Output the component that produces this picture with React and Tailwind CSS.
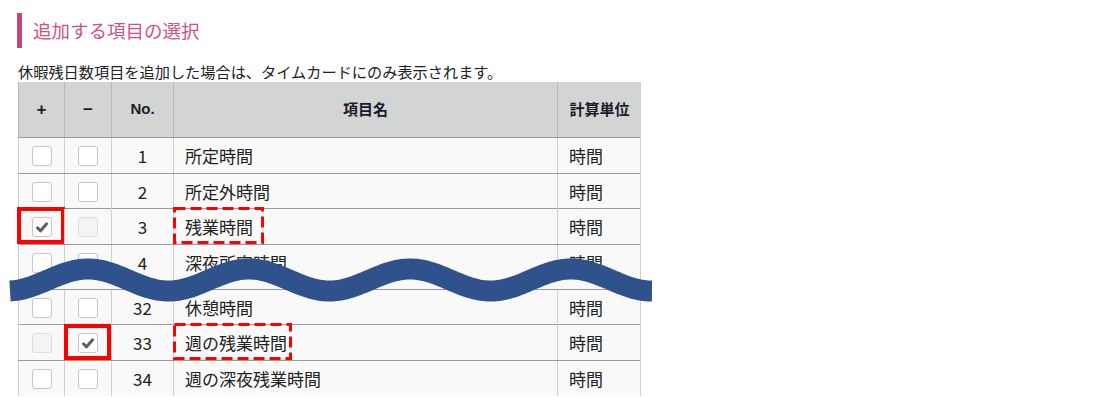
import React from 'react'

const rows = [
  { no: '1', name: '所定時間', h: 36 },
  { no: '2', name: '所定外時間', h: 35 },
  { no: '3', name: '残業時間', h: 36, plus: 'checked', minus: 'disabled', markPlus: true, dashW: 91 },
  { no: '4', name: '深夜所定時間', h: 45 },
  { no: '32', name: '休憩時間', h: 35 },
  { no: '33', name: '週の残業時間', h: 36, plus: 'disabled', minus: 'checked', markMinus: true, dashW: 119 },
  { no: '34', name: '週の深夜残業時間', h: 36 },
]

function Checkbox({ state }) {
  if (state === 'disabled') {
    return <div className="h-[20px] w-[20px] rounded-[3px] border border-[#dedede] bg-[#f4f4f4]" />
  }
  return (
    <div className="flex h-[20px] w-[20px] items-center justify-center rounded-[3px] border border-[#c6c6c6] bg-white">
      {state === 'checked' && (
        <svg width="14" height="14" viewBox="0 0 14 14">
          <path d="M2.5 7.8 L5.6 10.8 L11.6 3.8" fill="none" stroke="#5f5f5f" strokeWidth="3" strokeLinecap="round" strokeLinejoin="round" />
        </svg>
      )}
    </div>
  )
}

// sine band that marks the rows left out between 4 and 32
function wavePath() {
  let d = ''
  for (let x = 10; x <= 652; x += 2) {
    const y = 280 - 11 * Math.cos((2 * Math.PI * (x - 88)) / 161)
    d += (x === 10 ? 'M' : 'L') + x + ' ' + y.toFixed(2) + ' '
  }
  return d
}

const cols = 'grid grid-cols-[46px_47px_62px_384px_84px]'

export default function App() {
  return (
    <div className="relative h-[397px] w-[1097px] overflow-hidden bg-white pl-[17px] pt-[13px] font-['Noto_Sans_CJK_JP',sans-serif] text-[#222]">
      <div className="flex h-[35px] items-center gap-[11px]">
        <div className="h-[35px] w-[5px] bg-[#c4457a]" />
        <h2 className="text-[18.5px] leading-none text-[#cf5084]">追加する項目の選択</h2>
      </div>
      <p className="mt-[13px] pl-[1px] text-[15.2px] leading-[20px]">休暇残日数項目を追加した場合は、タイムカードにのみ表示されます。</p>

      <div className="ml-[1px] mt-[1px] w-[623px] border-r border-[#cfcfcf]">
        <div className={`${cols} h-[55px] bg-[#d3d5d5] text-[15px] font-bold text-[#1b1b2b]`}>
          <div className="flex items-center justify-center border-l border-[#b9b9b9] font-['Liberation_Sans',sans-serif] text-[17px]">+</div>
          <div className="flex items-center justify-center border-l border-[#b9b9b9] font-['Liberation_Sans',sans-serif] text-[17px]">−</div>
          <div className="flex items-center justify-center border-l border-[#b9b9b9] font-['Liberation_Sans',sans-serif] text-[15px]">No.</div>
          <div className="flex items-center justify-center border-l border-[#b9b9b9]">項目名</div>
          <div className="flex items-center justify-center border-l border-[#b9b9b9]">計算単位</div>
        </div>
        {rows.map((r) => (
          <div key={r.no} className={`${cols} border-t border-[#9a9a9a] bg-[#f9f9f9] text-[17px]`} style={{ height: r.h }}>
            <div className="relative flex h-[35px] items-center justify-center border-l border-[#cfcfcf]">
              <Checkbox state={r.plus} />
              {r.markPlus && <div className="absolute -left-[2px] -top-[2px] h-[37px] w-[48px] border-[4px] border-[#ff0000]" />}
            </div>
            <div className="relative flex h-[35px] items-center justify-center border-l border-[#cfcfcf]">
              <Checkbox state={r.minus} />
              {r.markMinus && <div className="absolute -left-[1px] -top-[1px] h-[36px] w-[47px] border-[4px] border-[#ff0000]" />}
            </div>
            <div className="flex h-[35px] items-center justify-center border-l border-[#cfcfcf]">{r.no}</div>
            <div className="relative flex h-[35px] items-center border-l border-[#cfcfcf] pl-[11px]">
              {r.name}
              {r.dashW && (
                <svg className="absolute -left-[1px] -top-[2px]" width={r.dashW} height="37">
                  <rect x="1.5" y="1.5" width={r.dashW - 3} height="34" fill="none" stroke="#ff0000" strokeWidth="3" strokeDasharray="11 5" />
                </svg>
              )}
            </div>
            <div className="flex h-[35px] items-center border-l border-[#cfcfcf] pl-[11px]">時間</div>
          </div>
        ))}
      </div>

      <svg className="pointer-events-none absolute left-0 top-0" width="1097" height="397">
        <path d={wavePath()} fill="none" stroke="#30528c" strokeWidth="21" />
      </svg>
    </div>
  )
}
